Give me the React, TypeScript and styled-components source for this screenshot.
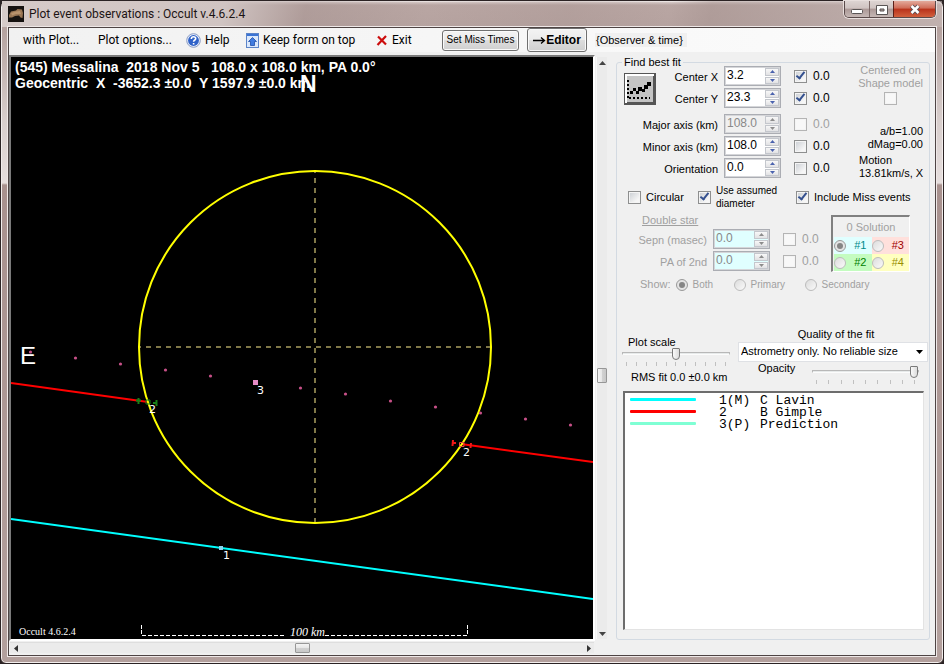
import React from "react";
import styled, { createGlobalStyle, css } from "styled-components";

const GlobalStyle = createGlobalStyle`
  *, *::before, *::after { box-sizing: border-box; }
  body { margin: 0; background: #2b2324; }
  button, input, select { font: inherit; color: inherit; margin: 0; }
`;

const ui = `"Liberation Sans", Arial, sans-serif`;
const menuFont = `Roboto, "Open Sans", sans-serif`;

/* ---------- window frame ---------- */

const Window = styled.div`
  min-height: 100vh;
  display: flex;
  flex-direction: column;
  padding: 0 7px 7px;
  border: 1px solid #2b2324;
  border-radius: 7px 7px 6px 6px;
  background: linear-gradient(#e9e1df 0, #b9a6a3 4px, #b5a29f 28px, #d8cecc 120px, #e6dedd 182px, #a8918e 184px, #b3a09d 100%);
  box-shadow: inset 0 0 0 1px #f3eeed;
  font: 11px/13px ${ui};
  color: #000;
`;

const TitleBar = styled.header`
  display: flex;
  align-items: flex-start;
  height: 26px;
  margin: 0 -6px;
  padding: 0 6px;
  flex: none;
  background: linear-gradient(100deg, #d6cbc9 0, #d0c4c2 220px, #a3908e66 300px, #b8a5a233 420px, #a8949155 560px, #b8a5a222 660px, #a8959288 700px, #cabdbb88 100%);
`;

const AppIcon = styled.svg`
  margin: 5px 5px 0 0;
`;

const Title = styled.h1`
  flex: 1;
  margin: 3px 0 0;
  font: 12px/20px ${menuFont};
  color: #1c1414;
`;

const WindowButtons = styled.div`
  display: flex;
  height: 17px;
  border: 1px solid #5a4a4a;
  border-top: 0;
  border-radius: 0 0 5px 5px;
  overflow: hidden;
  box-shadow: 0 0 0 1px #e8dfdd;
`;

const WindowButton = styled.button<{ $close?: boolean }>`
  width: ${(p) => (p.$close ? 42 : 24)}px;
  padding: 0;
  display: grid;
  place-items: center;
  border: 0;
  border-left: 1px solid ${(p) => (p.$close ? "#5b2019" : "#7a6765")};
  background: ${(p) =>
    p.$close
      ? "linear-gradient(#e3a99b, #cf6b56 45%, #b8321b 50%, #d2603d)"
      : "linear-gradient(#ddd4d2, #cfc3c1 45%, #ab9896 50%, #c6b8b5)"};
  &:first-child { border-left: 0; }
`;

const Client = styled.main`
  flex: 1;
  display: flex;
  flex-direction: column;
  border: 1px solid #4e4444;
  background: #f0f0f0;
  box-shadow: 0 0 0 1px #efe8e7;
`;

/* ---------- menu bar ---------- */

const MenuBar = styled.nav`
  display: flex;
  align-items: center;
  height: 24px;
  padding-left: 14px;
  background: linear-gradient(90deg, #f1f1f1, #fcfcfc);
  font: 12px/20px ${menuFont};
`;

const MenuItem = styled.button<{ $w: number }>`
  display: flex;
  align-items: center;
  gap: 4px;
  flex: none;
  width: ${(p) => p.$w}px;
  padding: 0;
  border: 0;
  background: none;
  white-space: nowrap;
`;

const PushButton = styled.button<{ $strong?: boolean }>`
  display: flex;
  align-items: center;
  justify-content: center;
  flex: none;
  width: ${(p) => (p.$strong ? 60 : 77)}px;
  height: ${(p) => (p.$strong ? 24 : 21)}px;
  margin-right: 8px;
  padding: 0;
  border: 1px solid #707070;
  border-radius: 3px;
  box-shadow: inset 0 0 0 1px #fafafa;
  background: linear-gradient(#f3f3f3, #ebebeb 50%, #dddddd 50%, #cfcfcf);
  white-space: nowrap;
  ${(p) =>
    p.$strong
      ? css`font: bold 12px/16px ${ui};`
      : css`font: 10px/12px ${ui};`}
`;

const ObserverNote = styled.span`
  padding: 1px 4px 0 1px;
  background: #f0f0f0;
  font: 11px/13px ${ui};
`;

/* ---------- body ---------- */

const Body = styled.div`
  flex: 1;
  display: flex;
`;

const PlotPane = styled.section`
  flex: 1;
  min-width: 0;
  display: grid;
  grid-template-columns: minmax(0, 1fr) 11px;
  grid-template-rows: minmax(0, 1fr) 11px;
  gap: 1px;
  padding: 3px 0 2px 0;
`;

const PlotFrame = styled.div`
  display: flex;
  border: 2px solid #7a7a7a;
  border-right-color: #fff;
  border-bottom-color: #fff;
  background: #000;
`;

const Plot = styled.svg`
  display: block;
  flex: 1;
  width: 100%;
  min-height: 0;
`;

const PlotHeading = styled.text`
  white-space: pre;
  font-size: 14px;
  font-weight: bold;
`;

const ScrollBar = styled.div<{ $vertical?: boolean }>`
  display: flex;
  align-items: center;
  background: #ebebeb;
  ${(p) =>
    p.$vertical
      ? css`flex-direction: column; margin: 2px 0 2px; border-left: 1px solid #f8f8f8;`
      : css`margin: 0 1px; border-top: 1px solid #dedede;`}
`;

const ScrollTrack = styled.div<{ $share: number }>`
  flex: ${(p) => p.$share};
`;

const ScrollArrow = styled.button`
  display: grid;
  place-items: center;
  width: 11px;
  height: 11px;
  padding: 0;
  border: 0;
  background: none;
`;

const ScrollThumb = styled.div<{ $vertical?: boolean }>`
  width: ${(p) => (p.$vertical ? 10 : 15)}px;
  height: ${(p) => (p.$vertical ? 15 : 10)}px;
  border: 1px solid #979797;
  border-radius: 1px;
  background: linear-gradient(${(p) => (p.$vertical ? "90deg" : "180deg")}, #f4f4f4, #e6e6e6 50%, #d2d2d2 50%, #c8c8c8);
`;

/* ---------- fit panel ---------- */

const FitPanel = styled.fieldset`
  flex: none;
  display: flex;
  flex-direction: column;
  width: 314px;
  min-width: 0;
  margin: 4px 5px 15px 9px;
  padding: 0 4px 9px 7px;
  border: 1px solid #d3dae2;
  border-radius: 3px;
`;

const Legend = styled.legend`
  margin-left: -2px;
  padding: 0 2px;
  line-height: 13px;
`;

const Block = styled.div<{ $top?: number }>`
  display: flex;
  margin-top: ${(p) => p.$top ?? 0}px;
`;

const ImageButton = styled.button`
  width: 32px;
  height: 32px;
  margin-top: 7px;
  padding: 0;
  border: 0;
  background: none;
`;

const FieldRows = styled.div`
  display: flex;
  flex-direction: column;
  gap: 2px;
`;

const FieldRow = styled.div<{ $label: number; $color: string }>`
  display: grid;
  grid-template-columns: ${(p) => p.$label}px 57px 13px auto;
  align-items: center;
  column-gap: 6px;
  height: 20px;
  color: ${(p) => p.$color};
`;

const FieldLabel = styled.label`
  text-align: right;
  white-space: nowrap;
  padding-top: 2px;
`;

const SpinBox = styled.div<{ $tint: string }>`
  display: flex;
  height: 20px;
  border: 1px solid #abadb3;
  box-shadow: inset 0 0 0 1px #d5d6d9;
  background: ${(p) => p.$tint};
`;

const SpinInput = styled.input`
  flex: 1;
  min-width: 0;
  padding: 0 0 2px 2px;
  border: 0;
  background: none;
  font-size: 12px;
  &:disabled { color: #888; }
`;

const SpinButtons = styled.div`
  display: flex;
  flex-direction: column;
  gap: 1px;
  width: 15px;
  padding: 1px 1px 1px 0;
`;

const SpinButton = styled.button`
  flex: 1;
  display: grid;
  place-items: center;
  padding: 0;
  border: 1px solid #c4c7cd;
  background: linear-gradient(#f8f8f8, #e2e2e4);
`;

const Check = styled.input.attrs({ type: "checkbox" })`
  appearance: none;
  flex: none;
  display: grid;
  place-items: center;
  width: 13px;
  height: 13px;
  border: 1px solid #8e8f8f;
  background: linear-gradient(135deg, #c9cdd2, #f6f6f6 75%);
  box-shadow: inset 0 0 0 1px #f4f4f4;
  &:checked::after {
    content: "";
    width: 5px;
    height: 9px;
    margin-top: -3px;
    border: solid #34508f;
    border-width: 0 2px 2px 0;
    transform: rotate(38deg);
  }
  &:disabled { border-color: #b4b4b4; background: #f8f8f8; }
`;

const CheckLabel = styled.label<{ $w?: number }>`
  display: flex;
  align-items: center;
  gap: 5px;
  width: ${(p) => (p.$w ? `${p.$w}px` : "auto")};
  white-space: nowrap;
`;

const ErrorLabel = styled.label<{ $muted: boolean }>`
  font-size: 12px;
  color: ${(p) => (p.$muted ? "#a0a0a0" : "#000")};
`;

const FieldCheck = styled.span`
  display: flex;
  margin-left: 7px;
`;

const ErrorCell = styled.span`
  padding-left: 7px;
`;

const ShapeModel = styled.label`
  display: flex;
  flex-direction: column;
  align-items: center;
  gap: 2px;
  margin: -2px 2px 0 auto;
  color: #a0a0a0;
  text-align: center;
  white-space: nowrap;
`;

const Readouts = styled.div`
  display: flex;
  flex-direction: column;
  width: 64px;
  margin: 11px 2px 0 auto;
  white-space: nowrap;
`;

const Readout = styled.span<{ $end?: boolean; $gap?: boolean }>`
  align-self: ${(p) => (p.$end ? "flex-end" : "flex-start")};
  margin-top: ${(p) => (p.$gap ? 3 : 0)}px;
`;

const Small = styled.span`
  font-size: 10px;
  line-height: 13px;
`;

const OptionRow = styled.div`
  display: flex;
  align-items: center;
  margin: 4px 0 0 4px;
  height: 26px;
`;

const DoubleTitle = styled.div`
  margin: 4px 0 2px 18px;
  text-decoration: underline;
  color: #a0a0a0;
  line-height: 13px;
`;

const Solutions = styled.div`
  align-self: flex-start;
  width: 79px;
  margin: 5px 15px 0 auto;
  border: 1px solid #fff;
  border-top: 2px solid #808080;
  border-left: 2px solid #808080;
  color: #a0a0a0;
  text-align: center;
`;

const SolutionTitle = styled.div`
  line-height: 20px;
`;

const SolutionGrid = styled.div`
  display: grid;
  grid-template-columns: 1fr 1fr;
  padding-left: 1px;
`;

const SolutionCell = styled.label<{ $bg: string; $fg: string }>`
  display: flex;
  align-items: center;
  justify-content: space-between;
  height: 17px;
  padding-right: 5px;
  background: ${(p) => p.$bg};
  color: ${(p) => p.$fg};
  font-size: 11px;
`;

const Radio = styled.input.attrs({ type: "radio" })`
  appearance: none;
  flex: none;
  display: grid;
  place-items: center;
  width: 12px;
  height: 12px;
  border: 1px solid #bcbcbc;
  border-radius: 50%;
  background: linear-gradient(135deg, #dcdcdc, #fafafa);
  &:checked { border-color: #999; background: #e4e4e4; }
  &:checked::after {
    content: "";
    width: 6px;
    height: 6px;
    border-radius: 50%;
    background: #858585;
  }
`;

const ShowRow = styled.div`
  display: flex;
  align-items: center;
  gap: 5px;
  margin: 6px 0 0 16px;
  height: 13px;
  color: #a0a0a0;
`;

const Controls = styled.div`
  display: flex;
  justify-content: space-between;
  margin: 37px 0 0 -2px;
`;

const ScaleColumn = styled.div`
  width: 108px;
  padding-top: 8px;
`;

const QualityColumn = styled.div`
  width: 190px;
  margin-right: -3px;
`;

const Caption = styled.label<{ $indent?: number; $center?: boolean }>`
  display: block;
  padding-left: ${(p) => p.$indent ?? 0}px;
  text-align: ${(p) => (p.$center ? "center" : "left")};
  line-height: 13px;
  white-space: nowrap;
`;

const Slider = styled.input.attrs({ type: "range" })`
  appearance: none;
  display: block;
  width: 100%;
  height: 12px;
  background: none;
  &::-webkit-slider-runnable-track {
    height: 3px;
    border: 1px solid #b8b8b8;
    border-bottom-color: #fcfcfc;
    background: #e7eaea;
  }
  &::-webkit-slider-thumb {
    appearance: none;
    width: 8px;
    height: 12px;
    margin-top: -5px;
    border: 1px solid #7a7a7a;
    border-radius: 1px 1px 4px 4px;
    background: linear-gradient(90deg, #fafafa, #dcdcdc);
  }
`;

const Ticks = styled.div`
  display: flex;
  justify-content: space-between;
  margin: 3px 4px 0;
`;

const Tick = styled.i`
  width: 1px;
  height: 4px;
  background: #c0c0c0;
`;

const SliderGroup = styled.div<{ $top: number; $w: number }>`
  width: ${(p) => p.$w}px;
  margin-top: ${(p) => p.$top}px;
`;

const RmsFit = styled.output`
  display: block;
  margin: 5px 0 0 9px;
  white-space: nowrap;
`;

const SelectBox = styled.div`
  display: grid;
  height: 20px;
  margin-top: 1px;
  border: 1px solid #dfe1e5;
  background: #fff;
  > * { grid-area: 1 / 1; }
`;

const Select = styled.select`
  appearance: none;
  width: 100%;
  padding: 0 18px 1px 2px;
  border: 0;
  background: none;
`;

const SelectArrow = styled.svg`
  place-self: center end;
  margin-right: 4px;
  pointer-events: none;
`;

const OpacityRow = styled.div`
  display: flex;
  justify-content: space-between;
  padding: 0 9px 0 20px;
`;

const EventList = styled.ul`
  flex: 1;
  margin: 7px 1px 0 -1px;
  padding: 2px 5px;
  border: 2px solid #6d6d6d;
  border-right: 1px solid #e3e3e3;
  border-bottom: 1px solid #e3e3e3;
  background: #fff;
  list-style: none;
  font: 13px/12px "Liberation Mono", "Courier New", monospace;
`;

const EventItem = styled.li`
  display: grid;
  grid-template-columns: 89px 41px 1fr;
  height: 12px;
`;

const Swatch = styled.span<{ $color: string }>`
  width: 66px;
  height: 3px;
  margin-top: 3px;
  border-radius: 1px;
  background: ${(p) => p.$color};
`;

/* ---------- pieces ---------- */

type FieldProps = {
  id: string;
  label: string;
  value: string;
  labelWidth: number;
  checked?: boolean;
  state?: "on" | "off" | "double";
};

function Field({ id, label, value, labelWidth, checked, state = "on" }: FieldProps) {
  const muted = state !== "on";
  const arrow = muted ? "#8c8c8c" : "#4a62ae";
  const tint = state === "on" ? "#fff" : state === "off" ? "#f0f0f0" : "#e0ffff";
  return (
    <FieldRow $label={labelWidth} $color={state === "double" ? "#a0a0a0" : "#000"}>
      <FieldLabel htmlFor={id}>{label}</FieldLabel>
      <SpinBox $tint={tint}>
        <SpinInput id={id} type="text" defaultValue={value} disabled={muted} />
        <SpinButtons>
          <SpinButton aria-label={`Increase ${label}`} disabled={muted}>
            <svg width="5" height="3"><path d="M0 3L2.5 0L5 3Z" fill={arrow} /></svg>
          </SpinButton>
          <SpinButton aria-label={`Decrease ${label}`} disabled={muted}>
            <svg width="5" height="3"><path d="M0 0L2.5 3L5 0Z" fill={arrow} /></svg>
          </SpinButton>
        </SpinButtons>
      </SpinBox>
      <FieldCheck>
        <Check id={`${id}-solve`} defaultChecked={checked} disabled={muted} />
      </FieldCheck>
      <ErrorCell>
        <ErrorLabel htmlFor={`${id}-solve`} $muted={muted}>0.0</ErrorLabel>
      </ErrorCell>
    </FieldRow>
  );
}

const predictionPath = [
  [30, 352], [75, 358], [120, 364], [165, 370], [210, 376], [300, 388], [345, 394],
  [390, 401], [435, 407], [480, 413], [525, 419], [570, 425],
];

const solutions = [
  { name: "#1", bg: "#e0ffff", fg: "#008b8b" },
  { name: "#3", bg: "#ffe0dc", fg: "#a00000" },
  { name: "#2", bg: "#c4fcc0", fg: "#008000" },
  { name: "#4", bg: "#ffffc0", fg: "#999000" },
];

const events = [
  { color: "#00ffff", code: "1(M)", name: "C Lavin" },
  { color: "#ff0000", code: "2", name: "B Gimple" },
  { color: "#7fffd4", code: "3(P)", name: "Prediction" },
];

function ChordPlot() {
  return (
    <Plot viewBox="11 57 582 582" role="img" aria-label="Occultation chords of (545) Messalina">
      <g stroke="#807848" strokeWidth="2" strokeDasharray="5 5" strokeDashoffset="3">
        <path d="M139 347H491" />
        <path d="M315 171V523" />
      </g>
      <path d="M11 519L593 599" stroke="#00ffff" strokeWidth="2" />
      <g stroke="#ff0000" strokeWidth="2">
        <path d="M11 383L148 402" />
        <path d="M461 444L593 462" />
      </g>
      <circle cx="315" cy="347" r="176" fill="none" stroke="#ffff00" strokeWidth="2" />
      <g stroke="#188018" strokeWidth="2" fill="none">
        <path d="M138.500 398V404M136 400.500H141M156.500 400V406M153 403H157" />
        <path d="M146 400H150V404H146Z" strokeWidth="1" />
      </g>
      <g stroke="#f01818" strokeWidth="2" fill="none">
        <path d="M453 440L452.500 446M453 443H456M471 443L470.500 448" />
        <path d="M459.500 442.500H464V446.500H459.500Z" strokeWidth="1" stroke="#e85040" />
      </g>
      <path d="M219 546H223V550H219Z" fill="#8ad4ee" />
      <path d="M253 380H258V385H253Z" fill="#e48cc8" />
      <g fill="#c85088">
        {predictionPath.map(([x, y]) => (
          <circle key={x} cx={x + 0.5} cy={y} r="1.600" />
        ))}
      </g>
      <g fill="#fff" fontFamily="Liberation Sans, Arial, sans-serif">
        <PlotHeading x="15" y="72">{"(545) Messalina  2018 Nov 5   108.0 x 108.0 km, PA 0.0°"}</PlotHeading>
        <PlotHeading x="15" y="88">{"Geocentric  X  -3652.3 ±0.0  Y 1597.9 ±0.0 km"}</PlotHeading>
        <text x="300" y="92" fontSize="23" fontWeight="bold">N</text>
        <text x="20" y="364" fontSize="24">E</text>
        <g fontSize="11" fontFamily="DejaVu Sans, sans-serif">
          <text x="149" y="413">2</text>
          <text x="463" y="456">2</text>
          <text x="257" y="394">3</text>
          <text x="223" y="559">1</text>
        </g>
      </g>
      <g stroke="#fff" fill="none">
        <path d="M141.500 625V635M467.500 625V635" strokeDasharray="4 1" />
        <path d="M142 635.500H286M325 635.500H467" strokeDasharray="4 2" />
      </g>
      <g fill="#fff" fontFamily="Liberation Serif, Times New Roman, serif">
        <text x="19" y="635" fontSize="10">Occult 4.6.2.4</text>
        <text x="290" y="636" fontSize="12" fontStyle="italic">100 km</text>
      </g>
    </Plot>
  );
}

function TickMarks({ count }: { count: number }) {
  return (
    <Ticks>
      {Array.from({ length: count }, (_, i) => (
        <Tick key={i} />
      ))}
    </Ticks>
  );
}

export default function App() {
  return (
    <>
      <GlobalStyle />
      <Window>
        <TitleBar>
          <AppIcon width="16" height="16" viewBox="0 0 16 16" aria-hidden="true">
            <rect width="16" height="16" fill="#161210" />
            <path d="M1 9L3 5.500L8 4.500L9.500 3L14 3.500L15 7L14.500 12L12.500 11.500L11 9.500L7 10L4 11.500L1 11.500Z" fill="#9a7654" />
            <path d="M3 7L8 5.500L12 5L13 8L8 8L4 9.500Z" fill="#b8926c" />
          </AppIcon>
          <Title>Plot event observations : Occult v.4.6.2.4</Title>
          <WindowButtons>
            <WindowButton aria-label="Minimize">
              <svg width="12" height="12"><rect x="0.500" y="6.500" width="11" height="4" rx="1" fill="#fff" stroke="#5a5555" /></svg>
            </WindowButton>
            <WindowButton aria-label="Restore">
              <svg width="12" height="11">
                <path d="M0.500 1.500H11.500V10.500H0.500Z M4 5V7H8V5Z" fillRule="evenodd" fill="#fff" stroke="#5a5555" />
              </svg>
            </WindowButton>
            <WindowButton $close aria-label="Close">
              <svg width="12" height="11" viewBox="0 0 12 11">
                <path d="M2.500 2L9.500 9M9.500 2L2.500 9" stroke="#5b4f55" strokeWidth="4.500" />
                <path d="M2.500 2L9.500 9M9.500 2L2.500 9" stroke="#fff" strokeWidth="2.500" />
              </svg>
            </WindowButton>
          </WindowButtons>
        </TitleBar>
        <Client>
          <MenuBar>
            <MenuItem $w={75}>with Plot...</MenuItem>
            <MenuItem $w={88}>Plot options...</MenuItem>
            <MenuItem $w={60}>
              <svg width="15" height="15" viewBox="0 0 15 15" aria-hidden="true">
                <circle cx="7.500" cy="7.500" r="6.800" fill="#e8eefa" stroke="#8a9cc4" />
                <circle cx="7.500" cy="7.500" r="5.400" fill="#2f62c8" />
                <path d="M5.300 6Q5.400 3.800 7.500 3.800Q9.700 3.800 9.700 5.600Q9.700 6.700 8.500 7.300Q7.600 7.800 7.600 8.800M7.600 9.900V11.400" fill="none" stroke="#fff" strokeWidth="1.600" />
              </svg>
              Help
            </MenuItem>
            <MenuItem $w={130}>
              <svg width="13" height="15" viewBox="0 0 13 15" aria-hidden="true">
                <rect x="0.500" y="0.500" width="12" height="14" fill="#dbe8fb" stroke="#5c84c8" />
                <rect x="1" y="1" width="11" height="2" fill="#3b74d4" />
                <path d="M6.500 4.500L10.500 8.500H8.500V12.500H4.500V8.500H2.500Z" fill="#3f7be0" stroke="#1f4fa8" strokeWidth="0.800" />
              </svg>
              Keep form on top
            </MenuItem>
            <MenuItem $w={66}>
              <svg width="12" height="11" viewBox="0 0 12 11" aria-hidden="true">
                <path d="M2 1.500L10 9.500M10 1L1.500 10" stroke="#cc0d0d" strokeWidth="2.200" />
              </svg>
              Exit
            </MenuItem>
            <PushButton>Set Miss Times</PushButton>
            <PushButton $strong>
              <svg width="13" height="9" viewBox="0 0 13 9" aria-hidden="true">
                <path d="M0 4.500H11M8 1.500L11.500 4.500L8 7.500" fill="none" stroke="#000" strokeWidth="1.300" />
              </svg>
              Editor
            </PushButton>
            <ObserverNote>{"{Observer & time}"}</ObserverNote>
          </MenuBar>
          <Body>
            <PlotPane>
              <PlotFrame>
                <ChordPlot />
              </PlotFrame>
              <ScrollBar $vertical>
                <ScrollArrow aria-label="Scroll up">
                  <svg width="7" height="4"><path d="M0 4L3.500 0L7 4Z" fill="#444" /></svg>
                </ScrollArrow>
                <ScrollTrack $share={55} />
                <ScrollThumb $vertical />
                <ScrollTrack $share={45} />
                <ScrollArrow aria-label="Scroll down">
                  <svg width="7" height="4"><path d="M0 0L3.500 4L7 0Z" fill="#444" /></svg>
                </ScrollArrow>
              </ScrollBar>
              <ScrollBar>
                <ScrollArrow aria-label="Scroll left">
                  <svg width="4" height="7"><path d="M4 0L0 3.500L4 7Z" fill="#333" /></svg>
                </ScrollArrow>
                <ScrollTrack $share={50} />
                <ScrollThumb />
                <ScrollTrack $share={50} />
                <ScrollArrow aria-label="Scroll right">
                  <svg width="4" height="7"><path d="M0 0L4 3.500L0 7Z" fill="#333" /></svg>
                </ScrollArrow>
              </ScrollBar>
            </PlotPane>

            <FitPanel>
              <Legend>Find best fit</Legend>
              <Block $top={-3}>
                <ImageButton aria-label="Fit to observations">
                  <svg width="32" height="32" viewBox="0 0 32 32">
                    <rect width="32" height="32" fill="#555" />
                    <path d="M1 1H30V3H3V30H1Z" fill="#fff" />
                    <rect x="3" y="3" width="26" height="26" fill="#c4c4c4" />
                    <path d="M4 7V26" stroke="#000" strokeWidth="2" strokeDasharray="2 2" />
                    <path d="M5 25H26" stroke="#000" strokeWidth="2" strokeDasharray="2 2" />
                    <path d="M6 18H9V21H6ZM9 15H12V18H9ZM12 18H15V21H12ZM14 14H18V18H14ZM18 16H21V19H18ZM20 12H24V16H20ZM23 9H27V13H23Z" fill="#000" />
                  </svg>
                </ImageButton>
                <FieldRows>
                  <Field id="cx" label="Center X" value="3.2" labelWidth={62} checked />
                  <Field id="cy" label="Center Y" value="23.3" labelWidth={62} checked />
                </FieldRows>
                <ShapeModel>
                  <span>Centered on<br />Shape model</span>
                  <Check disabled />
                </ShapeModel>
              </Block>
              <Block $top={6}>
                <FieldRows>
                  <Field id="major" label="Major axis (km)" value="108.0" labelWidth={94} state="off" />
                  <Field id="minor" label="Minor axis (km)" value="108.0" labelWidth={94} />
                  <Field id="orient" label="Orientation" value="0.0" labelWidth={94} />
                </FieldRows>
                <Readouts>
                  <Readout $end>a/b=1.00</Readout>
                  <Readout $end>dMag=0.00</Readout>
                  <Readout $gap>Motion</Readout>
                  <Readout>13.81km/s, X</Readout>
                </Readouts>
              </Block>
              <OptionRow>
                <CheckLabel $w={70}><Check />Circular</CheckLabel>
                <CheckLabel $w={98}>
                  <Check defaultChecked />
                  <Small>Use assumed<br />diameter</Small>
                </CheckLabel>
                <CheckLabel><Check defaultChecked />Include Miss events</CheckLabel>
              </OptionRow>
              <Block>
                <div>
                  <DoubleTitle>Double star</DoubleTitle>
                  <FieldRows>
                    <Field id="sepn" label="Sepn (masec)" value="0.0" labelWidth={83} state="double" />
                    <Field id="pa2" label="PA of 2nd" value="0.0" labelWidth={83} state="double" />
                  </FieldRows>
                </div>
                <Solutions>
                  <SolutionTitle>0 Solution</SolutionTitle>
                  <SolutionGrid>
                    {solutions.map((s, i) => (
                      <SolutionCell key={s.name} $bg={s.bg} $fg={s.fg}>
                        <Radio name="solution" defaultChecked={i === 0} />
                        {s.name}
                      </SolutionCell>
                    ))}
                  </SolutionGrid>
                </Solutions>
              </Block>
              <ShowRow>
                <span>Show:</span>
                <CheckLabel $w={53}><Radio name="show" defaultChecked /><Small>Both</Small></CheckLabel>
                <CheckLabel $w={66}><Radio name="show" /><Small>Primary</Small></CheckLabel>
                <CheckLabel><Radio name="show" /><Small>Secondary</Small></CheckLabel>
              </ShowRow>
              <Controls>
                <ScaleColumn>
                  <Caption htmlFor="scale" $indent={6}>Plot scale</Caption>
                  <SliderGroup $w={108} $top={-2}>
                    <Slider id="scale" min={0} max={10} defaultValue={5} />
                    <TickMarks count={11} />
                  </SliderGroup>
                  <RmsFit>RMS fit 0.0 ±0.0 km</RmsFit>
                </ScaleColumn>
                <QualityColumn>
                  <Caption htmlFor="quality" $center $indent={6}>Quality of the fit</Caption>
                  <SelectBox>
                    <Select id="quality">
                      <option>Astrometry only. No reliable size</option>
                    </Select>
                    <SelectArrow width="7" height="4"><path d="M0 0H7L3.500 4Z" /></SelectArrow>
                  </SelectBox>
                  <OpacityRow>
                    <Caption htmlFor="opacity">Opacity</Caption>
                    <SliderGroup $w={107} $top={3}>
                      <Slider id="opacity" min={0} max={8} defaultValue={8} />
                      <TickMarks count={9} />
                    </SliderGroup>
                  </OpacityRow>
                </QualityColumn>
              </Controls>
              <EventList>
                {events.map((e) => (
                  <EventItem key={e.name}>
                    <Swatch $color={e.color} />
                    <span>{e.code}</span>
                    <span>{e.name}</span>
                  </EventItem>
                ))}
              </EventList>
            </FitPanel>
          </Body>
        </Client>
      </Window>
    </>
  );
}
